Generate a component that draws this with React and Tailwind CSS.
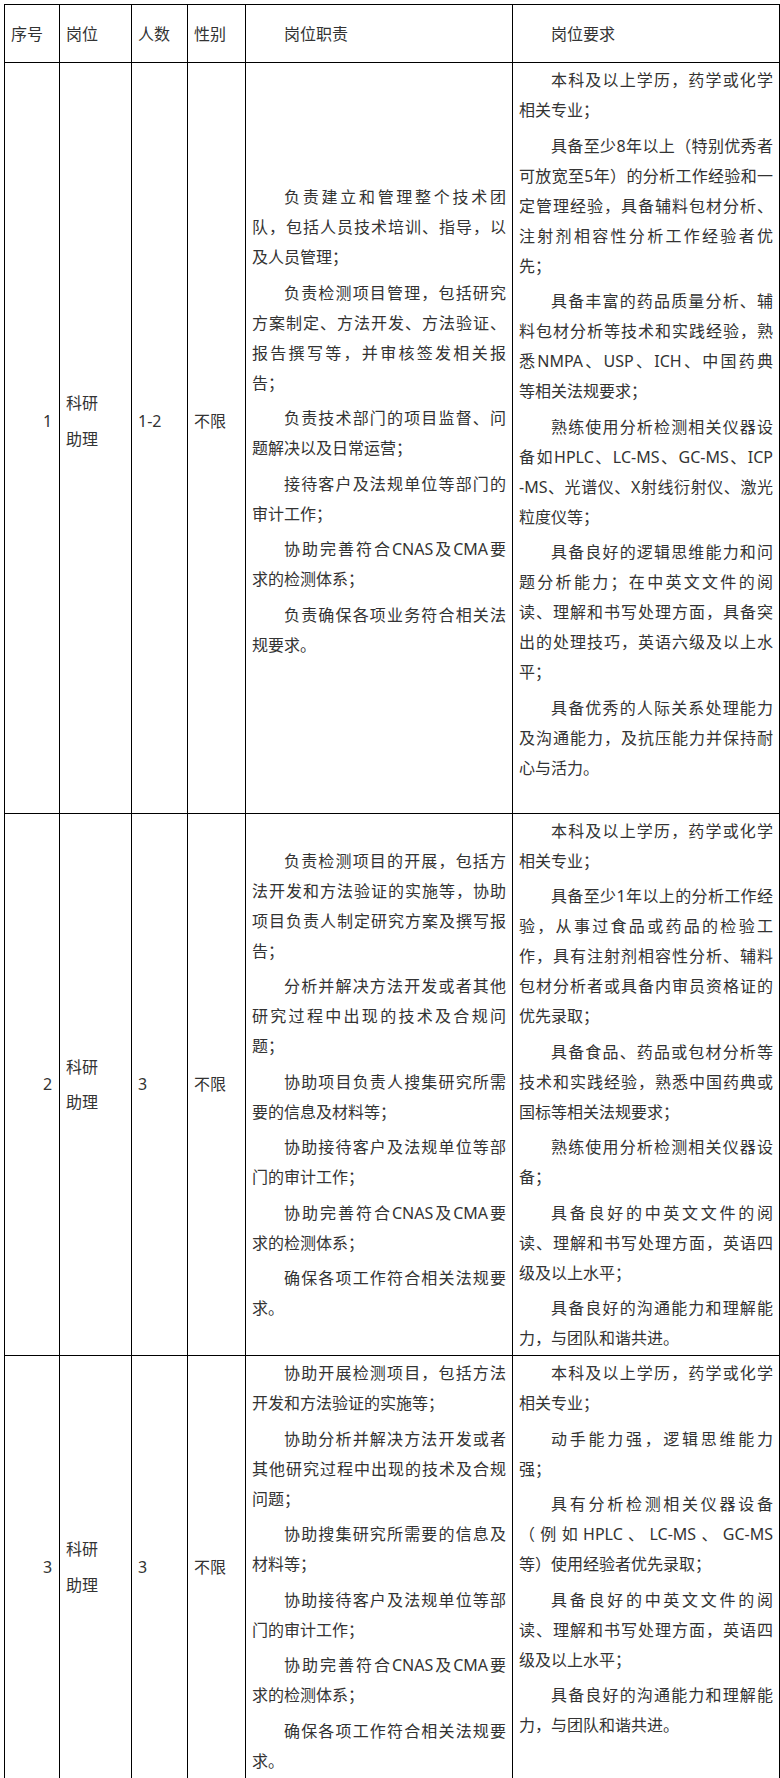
const ROWS = [
  {
    no: '1',
    count: '1-2',
    gender: '不限',
    first: true,
    duties: [
      ['负责建立和管理整个技术团', '队，包括人员技术培训、指导，以', '及人员管理；'],
      ['负责检测项目管理，包括研究', '方案制定、方法开发、方法验证、', '报告撰写等，并审核签发相关报', '告；'],
      ['负责技术部门的项目监督、问', '题解决以及日常运营；'],
      ['接待客户及法规单位等部门的', '审计工作；'],
      ['协助完善符合CNAS及CMA要', '求的检测体系；'],
      ['负责确保各项业务符合相关法', '规要求。'],
    ],
    reqs: [
      ['本科及以上学历，药学或化学', '相关专业；'],
      ['具备至少8年以上（特别优秀者', '可放宽至5年）的分析工作经验和一', '定管理经验，具备辅料包材分析、', '注射剂相容性分析工作经验者优', '先；'],
      ['具备丰富的药品质量分析、辅', '料包材分析等技术和实践经验，熟', '悉NMPA、USP、ICH、中国药典', '等相关法规要求；'],
      ['熟练使用分析检测相关仪器设', '备如HPLC、LC-MS、GC-MS、ICP', '-MS、光谱仪、X射线衍射仪、激光', '粒度仪等；'],
      ['具备良好的逻辑思维能力和问', '题分析能力；在中英文文件的阅', '读、理解和书写处理方面，具备突', '出的处理技巧，英语六级及以上水', '平；'],
      ['具备优秀的人际关系处理能力', '及沟通能力，及抗压能力并保持耐', '心与活力。'],
    ],
  },
  {
    no: '2',
    count: '3',
    gender: '不限',
    duties: [
      ['负责检测项目的开展，包括方', '法开发和方法验证的实施等，协助', '项目负责人制定研究方案及撰写报', '告；'],
      ['分析并解决方法开发或者其他', '研究过程中出现的技术及合规问', '题；'],
      ['协助项目负责人搜集研究所需', '要的信息及材料等；'],
      ['协助接待客户及法规单位等部', '门的审计工作；'],
      ['协助完善符合CNAS及CMA要', '求的检测体系；'],
      ['确保各项工作符合相关法规要', '求。'],
    ],
    reqs: [
      ['本科及以上学历，药学或化学', '相关专业；'],
      ['具备至少1年以上的分析工作经', '验，从事过食品或药品的检验工', '作，具有注射剂相容性分析、辅料', '包材分析者或具备内审员资格证的', '优先录取；'],
      ['具备食品、药品或包材分析等', '技术和实践经验，熟悉中国药典或', '国标等相关法规要求；'],
      ['熟练使用分析检测相关仪器设', '备；'],
      ['具备良好的中英文文件的阅', '读、理解和书写处理方面，英语四', '级及以上水平；'],
      ['具备良好的沟通能力和理解能', '力，与团队和谐共进。'],
    ],
  },
  {
    no: '3',
    count: '3',
    gender: '不限',
    duties: [
      ['协助开展检测项目，包括方法', '开发和方法验证的实施等；'],
      ['协助分析并解决方法开发或者', '其他研究过程中出现的技术及合规', '问题；'],
      ['协助搜集研究所需要的信息及', '材料等；'],
      ['协助接待客户及法规单位等部', '门的审计工作；'],
      ['协助完善符合CNAS及CMA要', '求的检测体系；'],
      ['确保各项工作符合相关法规要', '求。'],
    ],
    reqs: [
      ['本科及以上学历，药学或化学', '相关专业；'],
      ['动手能力强，逻辑思维能力', '强；'],
      ['具有分析检测相关仪器设备', '（例如HPLC、LC-MS、GC-MS', '等）使用经验者优先录取；'],
      ['具备良好的中英文文件的阅', '读、理解和书写处理方面，英语四', '级及以上水平；'],
      ['具备良好的沟通能力和理解能', '力，与团队和谐共进。'],
    ],
  },
]

// one paragraph = lines as in the original; all but the last are justified edge to edge
function Para({ lines }) {
  return (
    <div className="mt-[5.5px] first:mt-0">
      {lines.map((line, i) => (
        <div
          key={i}
          className={`${i === 0 ? 'pl-8' : ''} ${i < lines.length - 1 ? 'text-justify [text-align-last:justify]' : ''}`}
        >
          {line}
        </div>
      ))}
    </div>
  )
}

const cell = 'border border-black px-[6px] align-middle'

export default function App() {
  return (
    <div
      className="bg-white min-h-[1778px] pt-[4px] pl-[4px] text-[16px] leading-[30px] text-[#333]"
      style={{ fontFamily: '"Noto Sans", "Noto Sans CJK SC", sans-serif' }}
    >
      <table className="w-[775px] table-fixed border-collapse">
        <colgroup>
          <col className="w-[55px]" />
          <col className="w-[72px]" />
          <col className="w-[56px]" />
          <col className="w-[58px]" />
          <col className="w-[267px]" />
          <col className="w-[267px]" />
        </colgroup>
        <thead>
          <tr className="h-[58px]">
            <th className={`${cell} text-left font-normal`}>序号</th>
            <th className={`${cell} text-left font-normal`}>岗位</th>
            <th className={`${cell} text-left font-normal`}>人数</th>
            <th className={`${cell} text-left font-normal`}>性别</th>
            <th className={`${cell} text-left font-normal pl-[38px]`}>岗位职责</th>
            <th className={`${cell} text-left font-normal pl-[38px]`}>岗位要求</th>
          </tr>
        </thead>
        <tbody>
          {ROWS.map(r => {
            const pad = r.first ? 'pt-[2px] pb-[36px]' : 'py-[2px]'
            return (
              <tr key={r.no}>
                <td className={`${cell} ${pad}`}><div className="pl-8">{r.no}</div></td>
                <td className={`${cell} ${pad}`}>
                  <div>科研</div>
                  <div className="mt-[5.5px]">助理</div>
                </td>
                <td className={`${cell} ${pad}`}>{r.count}</td>
                <td className={`${cell} ${pad}`}>{r.gender}</td>
                <td className={`${cell} ${pad}`}>
                  {r.duties.map((p, i) => <Para key={i} lines={p} />)}
                </td>
                <td className={`border border-black px-[6px] align-top ${r.first ? 'pt-[2px] pb-[30px]' : 'py-[2px]'}`}>
                  {r.reqs.map((p, i) => <Para key={i} lines={p} />)}
                </td>
              </tr>
            )
          })}
        </tbody>
      </table>
    </div>
  )
}
